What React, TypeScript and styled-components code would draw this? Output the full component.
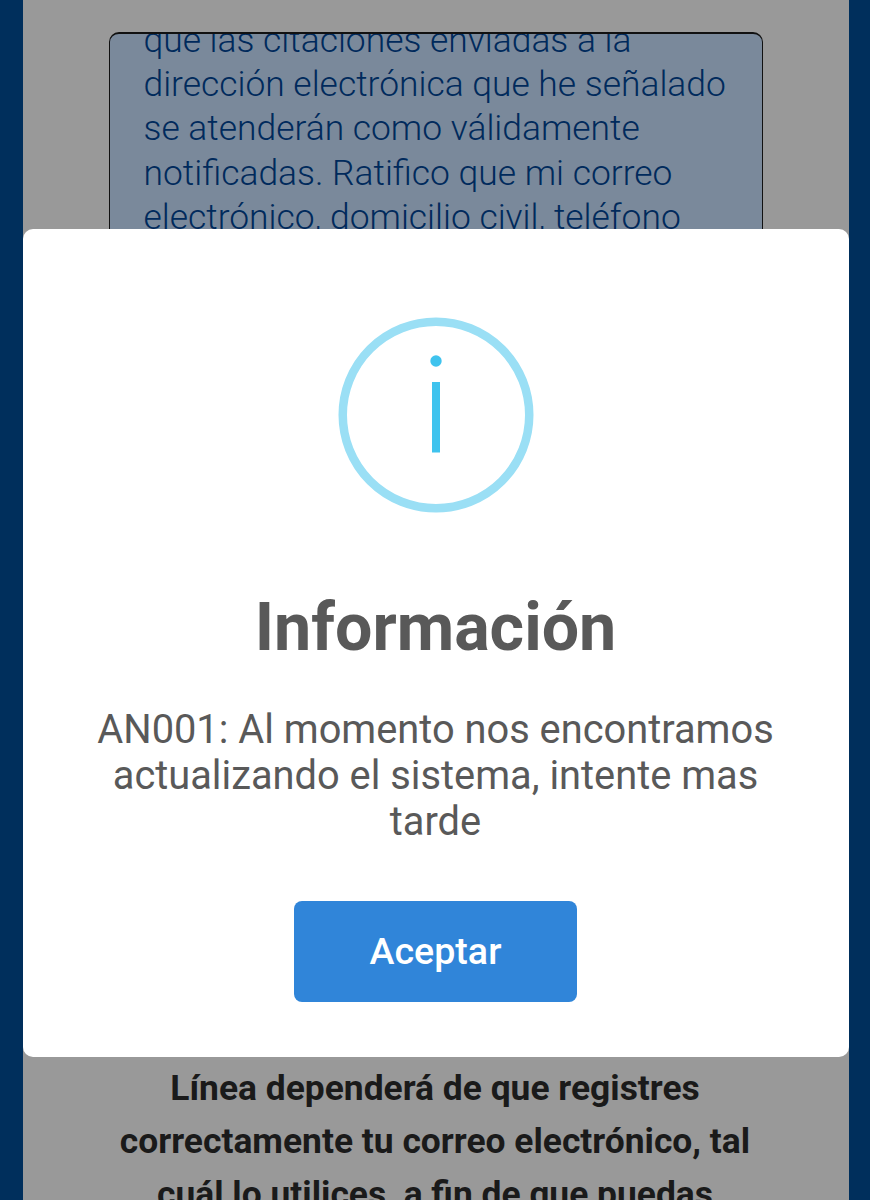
import { createGlobalStyle, styled } from 'styled-components';

const GlobalStyle = createGlobalStyle`
  html, body {
    margin: 0;
    height: 100%;
    overflow: hidden;
    background: #002f5c;
    font-family: Roboto, "Liberation Sans", sans-serif;
  }
`;

const Page = styled.div`
  position: relative;
  width: 870px;
  height: 1200px;
  overflow: hidden;
  background: #002f5c;
`;

const Panel = styled.main`
  box-sizing: border-box;
  width: 826px;
  height: 1200px;
  margin-left: 23px;
  padding: 32px 86px 0;
  overflow: hidden;
  background: #999999;
`;

const TermsBox = styled.div`
  box-sizing: border-box;
  width: 654px;
  height: 1020px;
  padding: 0 20px 0 33.5px;
  overflow: hidden;
  background: #7a899b;
  border: 1px solid #111;
  border-top-width: 2px;
  border-radius: 10px;
`;

const TermsText = styled.p`
  margin: -16px 0 0;
  font-size: 35.4px;
  font-weight: 300;
  line-height: 44.2px;
  color: #002a5c;
`;

const Notice = styled.p`
  width: 680px;
  margin: 10px 0 0 -14px;
  font-size: 35.4px;
  font-weight: 700;
  line-height: 53px;
  text-align: center;
  color: #1a1a1a;
`;

const Modal = styled.section`
  position: absolute;
  top: 229px;
  left: 23px;
  display: flex;
  flex-direction: column;
  align-items: center;
  box-sizing: border-box;
  width: 826px;
  height: 828px;
  padding: 88px 1px 0 0;
  background: #fff;
  border-radius: 10px;
`;

const InfoIcon = styled.svg`
  display: block;
  width: 196px;
  height: 196px;
`;

const Title = styled.h2`
  margin: 75px 0 0;
  font-size: 66.3px;
  font-weight: 700;
  line-height: 78px;
  color: #595959;
`;

const Message = styled.p`
  width: 700px;
  margin: 41px 0 0;
  font-size: 39.8px;
  font-weight: 400;
  line-height: 46px;
  text-align: center;
  color: #595959;
`;

const AcceptButton = styled.button`
  width: 283px;
  height: 101px;
  margin-top: 56px;
  padding: 0 0 2px;
  font-family: inherit;
  font-size: 37.6px;
  font-weight: 500;
  color: #fff;
  background: #3085d9;
  border: 0;
  border-radius: 8px;
`;

export default function App() {
  return (
    <Page>
      <GlobalStyle />
      <Panel>
        <TermsBox>
          <TermsText>
            que las citaciones enviadas a la dirección electrónica que he señalado se atenderán como
            válidamente notificadas. Ratifico que mi correo electrónico, domicilio civil, teléfono
          </TermsText>
        </TermsBox>
        <Notice>
          Línea dependerá de que registres correctamente tu correo electrónico, tal cuál lo utilices, a
          fin de que puedas
        </Notice>
      </Panel>
      <Modal>
        <InfoIcon viewBox="0 0 196 196">
          <circle cx="98" cy="98" r="93.25" fill="none" stroke="#9adff5" strokeWidth="8.5" />
          <circle cx="98" cy="44" r="5.7" fill="#3fc3ee" />
          <rect x="94" y="65" width="8" height="70.5" fill="#3fc3ee" />
        </InfoIcon>
        <Title>Información</Title>
        <Message>AN001: Al momento nos encontramos actualizando el sistema, intente mas tarde</Message>
        <AcceptButton>Aceptar</AcceptButton>
      </Modal>
    </Page>
  );
}
